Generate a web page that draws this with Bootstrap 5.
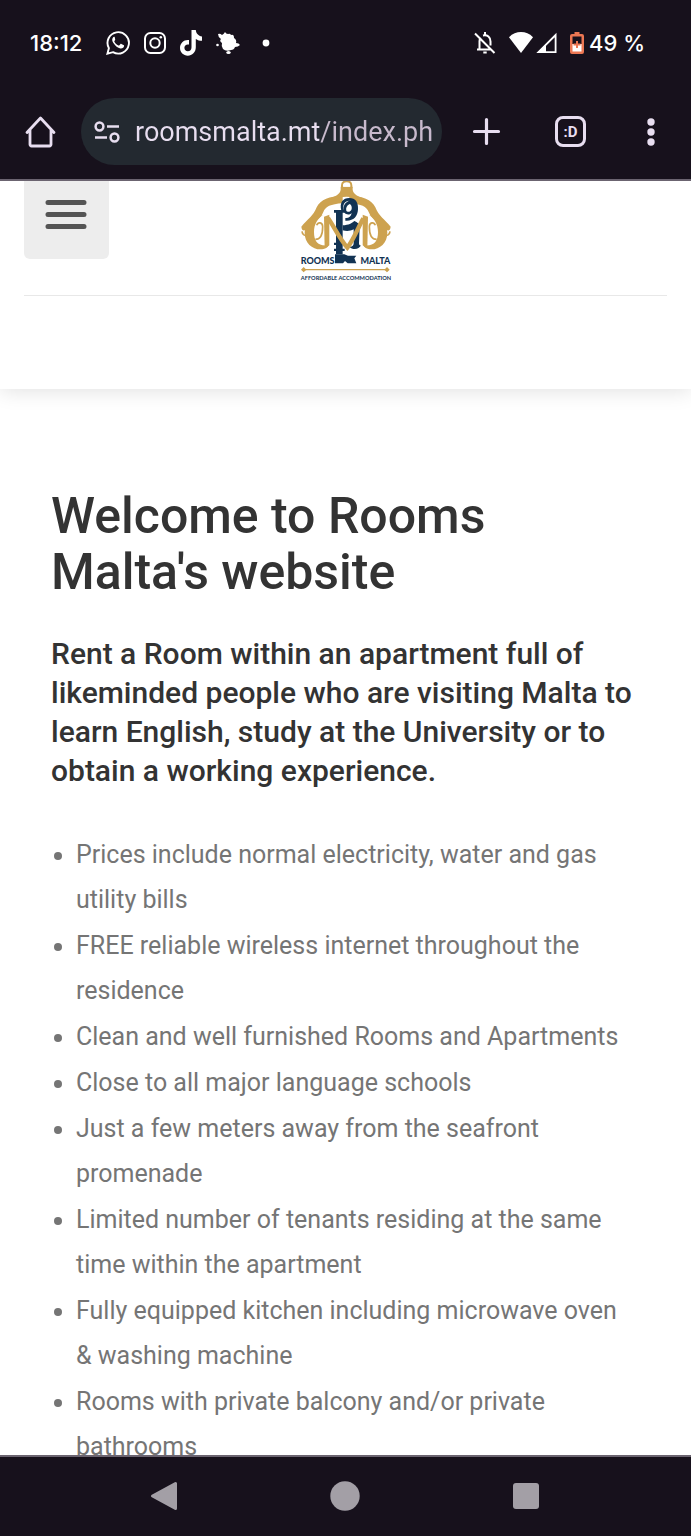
<!DOCTYPE html>
<html lang="en">
<head>
<meta charset="utf-8">
<meta name="viewport" content="width=device-width, initial-scale=1">
<title>Rooms Malta</title>
<link href="https://cdn.jsdelivr.net/npm/bootstrap@5.3.0/dist/css/bootstrap.min.css" rel="stylesheet">
<script src="https://cdn.jsdelivr.net/npm/bootstrap@5.3.0/dist/js/bootstrap.bundle.min.js" defer></script>
<style>
body { font-family: Roboto, "Liberation Sans", sans-serif; background: #fff; }
svg { display: block; flex: none; }
.screen { height: 100vh; }
.chrome-bg { background: #17111c; color: #fff; }
.status { height: 86px; padding: 0 46px 0 30px; font: 500 22px/28px Inter, sans-serif; }
.status-icons { gap: 14px; }
.status-system { gap: 5px; }
.toolbar { height: 95px; padding: 0 27px 2px 24px; border-bottom: 2px solid #6b6470; }
.toolbar-actions { gap: 52px; }
.plain { background: none; border: 0; padding: 0; color: #e8def0; }
.omnibox { height: 67px; min-width: 0; background: #232930; border-radius: 34px; padding: 0 9px 0 13px; margin: 0 29px 0 24px; gap: 15px; color: #e8def0; }
.address { font-size: 27px; line-height: 32px; color: transparent; background: linear-gradient(90deg, #e8def0 185px, #c8bacd 185px); -webkit-background-clip: text; background-clip: text; outline: 0; }
.site-head { height: 208px; padding: 0 24px; box-shadow: 0 2px 20px rgba(0,0,0,.12); }
.head-row { height: 115px; border-bottom: 1px solid #e8e8e8; }
.menu-slot { width: 85px; }
.menu-btn { height: 78px; background: #ededed; border: 0; border-radius: 0 0 6px 6px; padding: 18px 21px; color: #555; }
.content { padding: 99px 55px 0 51px; }
.content h1 { font-size: 50px; line-height: 56px; font-weight: 500; color: #333; margin: 0 0 34px; }
.content h2 { font-size: 30px; line-height: 39px; font-weight: 500; color: #333; margin: 0 0 42px; }
.content ul { font-size: 25px; line-height: 45px; color: #757575; padding-left: 25px; margin: 0; }
.content li { margin-bottom: 1px; }
.sysnav { height: 81px; border-top: 2px solid #6b6470; padding: 0 76px 2px 74px; }
.sysnav .plain { color: #a39fa6; }
</style>
</head>
<body>
<div class="screen d-flex flex-column overflow-hidden">
  <div class="status chrome-bg d-flex align-items-center flex-shrink-0">
    <span class="me-4">18:12</span>
    <div class="status-icons d-flex align-items-center">
      <svg width="24" height="24" viewBox="0 0 24 24" fill="none" stroke="#fff" stroke-width="1.9"><path d="M1.4 22.7l1.5-5.6A10.700 10.700 0 1 1 7 21.200z"/><path fill="#fff" stroke="none" d="M8.700 6c-.5-.4-1.200-.3-1.700.4-1.200 1.500-1 3.500.4 5.600 2 3 4.300 4.900 7 5.500 1.800.3 3.600-.8 3.700-2.700 0-.5-.2-.6-.7-.9l-2-1c-.5-.2-.8-.1-1.100.3l-.9 1.100c-.3.3-.6.3-1 .1-1.800-.9-3-2-4-3.700-.2-.4-.1-.6.2-.9.600-.7.800-1.100.5-1.700z"/></svg>
      <svg width="22" height="22" viewBox="0 0 22 22" fill="none" stroke="#fff" stroke-width="2"><rect x="1" y="1" width="20" height="20" rx="5.500"/><circle cx="11" cy="11" r="4.700"/><circle cx="16.800" cy="5.200" r="1.300" fill="#fff" stroke="none"/></svg>
      <svg width="22" height="26" viewBox="0 0 22 26" fill="#fff"><path d="M11.500 0h4.300c.3 3.400 2.600 6 6.200 6.400v4.400c-2.400 0-4.400-.7-6.200-1.900v8.400c0 5-3.600 8.400-8 8.400S0 22.300 0 17.800c0-5 4.200-8.500 9-7.800v4.600c-2.600-.7-4.600.9-4.600 3.200 0 2 1.500 3.400 3.400 3.400 2.300 0 3.700-1.500 3.700-4z"/></svg>
      <svg width="24" height="24" viewBox="0 0 24 24" fill="#fff"><path d="M2 3q2-1 4 1 2-1 3-3 1 2 3 2 2-1 3 1 3-1 3 3 3 2 2 5 3 0 4 2-2 2-5 2-1 3-4 3-5 2-8-1-2-3-1-6-3-2-1-4-3-2-3-5z"/><circle cx="1.500" cy="14" r="1.300"/><ellipse cx="12.500" cy="21.500" rx="2.200" ry="1.600"/></svg>
      <svg width="24" height="8" viewBox="0 0 24 8" fill="#fff"><circle cx="12" cy="4" r="3.400"/></svg>
    </div>
    <div class="status-system d-flex align-items-center ms-auto">
      <svg width="22" height="22" viewBox="0 0 22 22" fill="none" stroke="#fff" stroke-width="2"><path d="M1 1.500L20.500 21M3 17.500h14.500M5.500 17.500V9c0-1.400.4-2.500 1.200-3.400M9 3.500c4.500-1 7.500 1.700 7.500 6v4"/><path d="M11 0v3M9.300 20.500h3.400"/></svg>
      <svg class="ms-2" width="48" height="22" viewBox="0 0 48 22" fill="#fff"><path d="M0 5.200C3.500 1.600 7.500 0 12 0s8.500 1.600 12 5.200L12 21z"/><path d="M29.500 20.100H46.600V3z" fill="none" stroke="#fff" stroke-width="1.800"/><path d="M28 21l9-9v9z"/></svg>
      <svg class="ms-2" width="14" height="22" viewBox="0 0 14 22"><path fill="#ec7753" d="M4.500 0h5v2H12a2 2 0 0 1 2 2v16a2 2 0 0 1-2 2H2a2 2 0 0 1-2-2V4a2 2 0 0 1 2-2h2.500z"/><path fill="#17111c" d="M2.500 4.500h9V12h-9z"/><path fill="#fff" d="M2.500 12h9v7.500h-9z"/><path fill="#ec7753" d="M6 9h2v2.500h2.500v2H8V16H6v-2.500H3.500v-2H6z"/></svg>
      <span>49 %</span>
    </div>
  </div>

  <div class="toolbar chrome-bg d-flex align-items-center flex-shrink-0">
    <button class="plain" aria-label="Home"><svg width="33" height="33" viewBox="0 0 33 33" fill="none" stroke="currentColor" stroke-width="2.800" stroke-linejoin="round" stroke-linecap="round"><path d="M3 17.500L16.500 3 30 17.500M6 15v14.500a1.500 1.500 0 0 0 1.500 1.500h18a1.500 1.500 0 0 0 1.500-1.500V15"/></svg></button>
    <div class="omnibox d-flex align-items-center flex-grow-1">
      <svg width="26" height="22" viewBox="0 0 26 22" fill="none" stroke="currentColor" stroke-width="2.500"><circle cx="5.500" cy="5.500" r="3.900"/><path d="M13 5.500h12M1 16.500h12"/><circle cx="20.500" cy="16.500" r="3.900"/></svg>
      <input class="plain address w-100" type="text" aria-label="Address" value="roomsmalta.mt/index.ph">
    </div>
    <div class="toolbar-actions d-flex align-items-center">
      <button class="plain" aria-label="New tab"><svg width="32" height="29" viewBox="0 0 32 29" fill="none" stroke="currentColor" stroke-width="3.200" stroke-linecap="round"><path d="M15.500 2.500v24M3.500 14.500h24"/></svg></button>
      <button class="plain" aria-label="Tabs"><svg width="31" height="31" viewBox="0 0 31 31"><rect x="1.500" y="1.500" width="28" height="28" rx="6.500" fill="none" stroke="currentColor" stroke-width="3"/><text x="15.500" y="21" text-anchor="middle" font-size="15" font-weight="700" fill="currentColor">:D</text></svg></button>
      <button class="plain" aria-label="More"><svg width="26" height="28" viewBox="0 0 26 28" fill="currentColor"><circle cx="13" cy="4" r="3.700"/><circle cx="13" cy="14" r="3.700"/><circle cx="13" cy="24" r="3.700"/></svg></button>
    </div>
  </div>

  <div class="flex-grow-1 overflow-hidden">
    <header class="site-head">
      <div class="head-row d-flex justify-content-between align-items-start">
        <button class="menu-slot menu-btn d-flex align-items-start" aria-label="Menu"><svg width="42" height="32" viewBox="0 0 42 32" stroke="currentColor" stroke-width="5" stroke-linecap="round"><path d="M3 3.500h36M3 15.500h36M3 27.500h36"/></svg></button>
        <a class="text-decoration-none" href="#" aria-label="Rooms Malta home">
          <svg width="92" height="101" viewBox="62 15 276 303">
            <defs>
              <g id="wing">
                <path d="M190 60C150 60 124 70 112 94 102 120 84 130 66 152c2 16 12 14 18 2 9-16 40-22 48-46 6-16 22-24 58-26z"/>
                <path d="M128 118C96 120 76 142 76 170c0 31 22 50 48 50 12 0 22-5 24-12-32 4-44-12-44-40 0-23 11-40 26-50z"/>
                <path d="M108 190c16 0 22-16 22-38 0-14-14-15-18-4M86 178c-10 2-17-2-18-12" fill="none" stroke="#cda24f" stroke-width="5"/>
                <path d="M134 122l16-6v92l-14 10z"/>
              </g>
            </defs>
            <g fill="#cda24f">
              <use href="#wing"/>
              <use href="#wing" transform="translate(400) scale(-1 1)"/>
              <path fill="none" stroke="#cda24f" stroke-width="6" d="M188 36V28c0-9 4-12 14-12s14 3 14 12v8"/>
              <path d="M184 32h36v9c2 12 12 18 28 24l-4 9c-12-8-28-12-42-12s-30 4-42 12l-4-9c16-6 26-12 28-24z"/>
              <path fill="#fff" d="M192 24h20v8h-20z"/>
            </g>
            <path fill="#fff" d="M186 84c6-14 46-18 50 8 2 24-8 38-30 38h-16z"/>
            <path fill="#123353" d="M164 102h34v8h-8v125h-20V110h-6zM164 200h32v7h-32zM164 218h32v7h-32z"/>
            <path fill="#123353" fill-rule="evenodd" d="M186 104c-6-24 4-38 24-38 19 0 27 13 26 34-1 23-15 36-38 34v-8c10 1 17-4 19-15-9 9-25 4-25-11 0-14 9-24 20-26-14-1-23 9-20 30zM211 84c-9 4-12 13-10 20 3 6 14 4 16-5 1-7-1-12-6-15z"/>
            <path fill="#123353" d="M190 148c18-1 28-6 35-13 9 5 16 7 16 17l-2 50c0 5 3 8 6 6-5 13-26 15-35 4 8 1 13-3 13-10v-42c-10 5-20 6-33 3z"/>
            <path fill="#123353" d="M167 235h28l11 4h25l-6 8 6 15h-26l-8-7-6 7h-24z"/>
            <path fill="none" stroke="#cda24f" stroke-width="13" d="M146 126c16 22 33 60 58 89 20-26 34-64 48-88"/>
            <g fill="#123353" font-family="Lato" font-weight="900">
              <text x="64" y="264" font-size="27">ROOMS</text>
              <text x="333" y="264" font-size="27" text-anchor="end">MALTA</text>
              <text x="200" y="312" font-size="17" font-weight="700" text-anchor="middle">AFFORDABLE ACCOMMODATION</text>
            </g>
            <path stroke="#cda24f" stroke-width="4" d="M72 281h252"/>
            <path fill="#cda24f" d="M65 281l8-8 8 8-8 8zM315 281l8-8 8 8-8 8z"/>
          </svg>
        </a>
        <span class="menu-slot"></span>
      </div>
    </header>
    <main class="content">
      <h1>Welcome to Rooms Malta's website</h1>
      <h2>Rent a Room within an apartment full of likeminded people who are visiting Malta to learn English, study at the University or to obtain a working experience.</h2>
      <ul>
        <li>Prices include normal electricity, water and gas utility bills</li>
        <li>FREE reliable wireless internet throughout the residence</li>
        <li>Clean and well furnished Rooms and Apartments</li>
        <li>Close to all major language schools</li>
        <li>Just a few meters away from the seafront promenade</li>
        <li>Limited number of tenants residing at the same time within the apartment</li>
        <li>Fully equipped kitchen including microwave oven &amp; washing machine</li>
        <li>Rooms with private balcony and/or private bathrooms</li>
      </ul>
    </main>
  </div>

  <nav class="sysnav chrome-bg d-flex align-items-center flex-shrink-0" aria-label="System">
    <button class="plain flex-fill d-flex justify-content-center" aria-label="Back"><svg width="28" height="30" viewBox="0 0 28 30" fill="currentColor" stroke="currentColor" stroke-width="3" stroke-linejoin="round"><path d="M2.500 15L25.500 2.500v25z"/></svg></button>
    <button class="plain flex-fill d-flex justify-content-center" aria-label="Home screen"><svg width="30" height="30" viewBox="0 0 30 30" fill="currentColor"><circle cx="15" cy="15" r="14.700"/></svg></button>
    <button class="plain flex-fill d-flex justify-content-center" aria-label="Recent apps"><svg width="26" height="26" viewBox="0 0 26 26" fill="currentColor"><rect width="26" height="26" rx="3"/></svg></button>
  </nav>
</div>
</body>
</html>
